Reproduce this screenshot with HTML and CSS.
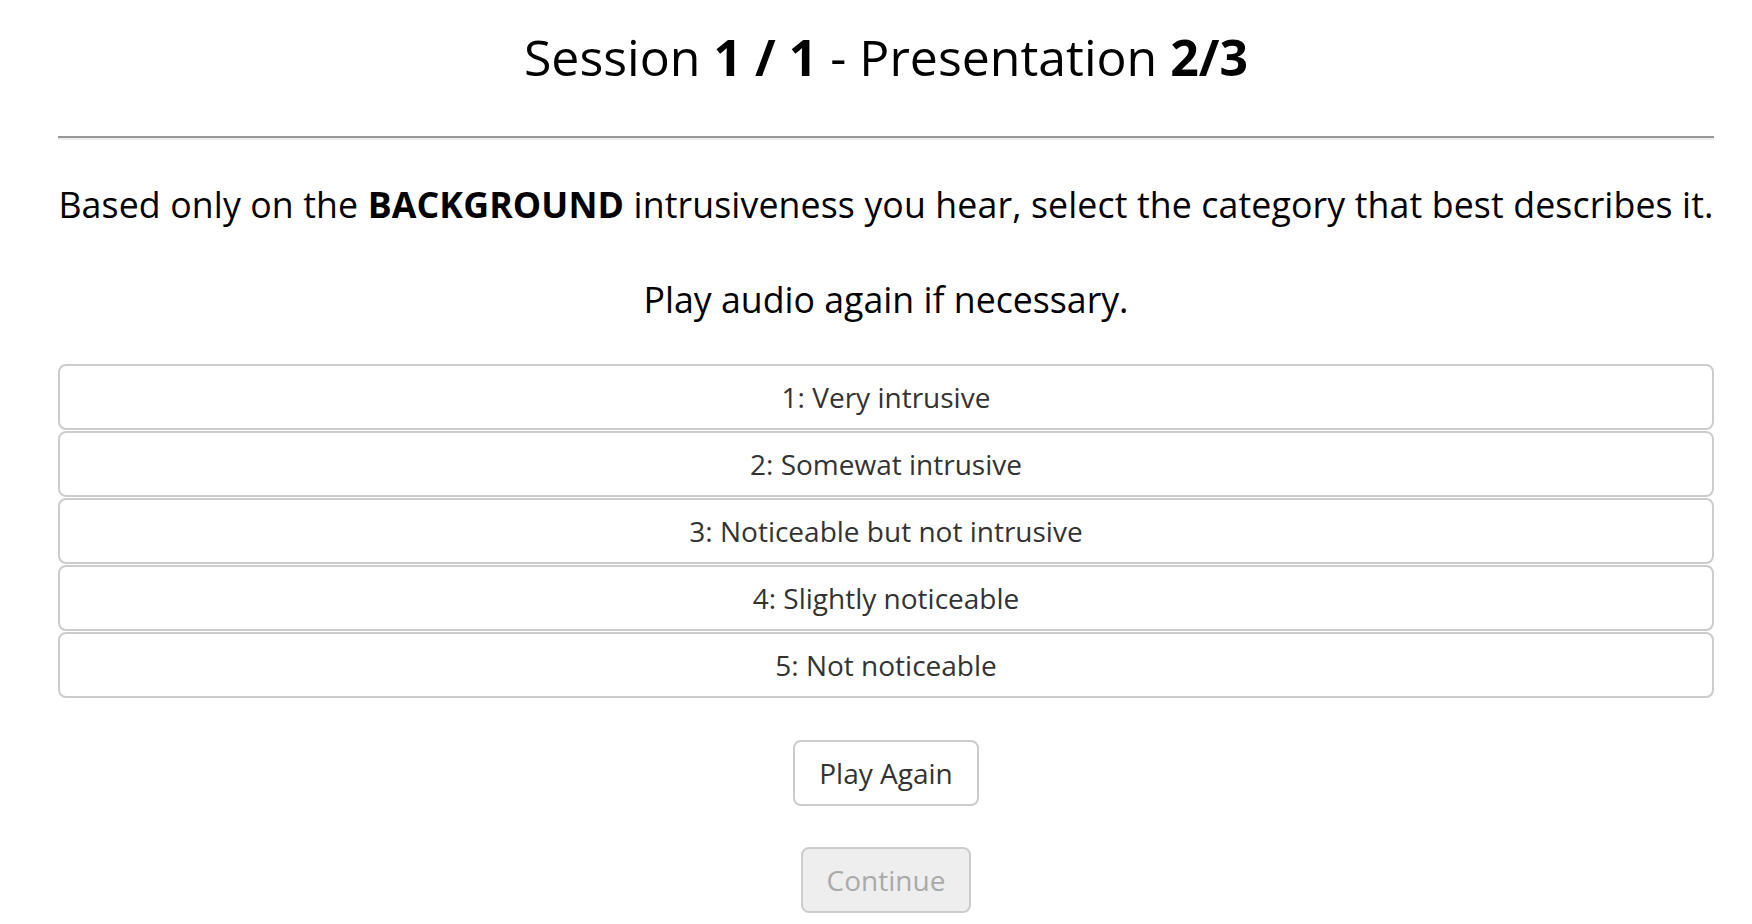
FILE: index.html
```html
<!DOCTYPE html>
<html>
<head>
<meta charset="utf-8">
<link rel="stylesheet" href="styles.css">
</head>
<body>
<div class="page">
  <h1 class="title">Session <b>1 / 1</b> - Presentation <b>2/3</b></h1>
  <hr class="rule">
  <p class="prompt">Based only on the <b>BACKGROUND</b> intrusiveness you hear, select the category that best describes it.</p>
  <p class="prompt">Play audio again if necessary.</p>
  <div class="options">
    <div class="option">1: Very intrusive</div>
    <div class="option">2: Somewat intrusive</div>
    <div class="option">3: Noticeable but not intrusive</div>
    <div class="option">4: Slightly noticeable</div>
    <div class="option">5: Not noticeable</div>
  </div>
  <div class="actions">
    <button class="btn">Play Again</button>
    <button class="btn btn-disabled" disabled>Continue</button>
  </div>
</div>
</body>
</html>
```

FILE: styles.css
```css
html, body {
  margin: 0;
  padding: 0;
  background: #fff;
}
body {
  font-family: "Open Sans", "Liberation Sans", sans-serif;
  color: #000;
}
.page {
  padding: 0 38px 0 58px;
}
.title {
  margin: 23px 0 0;
  font-size: 50px;
  line-height: 68px;
  font-weight: 400;
  text-align: center;
}
.title b { font-weight: 700; }
.rule {
  margin: 45px 0 0;
  border: 0;
  border-top: 2px solid #999;
  border-bottom: 2px solid #eee;
  height: 0;
}
.prompt {
  margin: 0;
  font-size: 35.7px;
  line-height: 49px;
  text-align: center;
  white-space: nowrap;
}
.prompt:first-of-type { margin-top: 40px; letter-spacing: 0.12px; }
.prompt + .prompt { margin-top: 46px; }
.options {
  margin-top: 40px;
  display: flex;
  flex-direction: column;
  gap: 1px;
}
.option {
  height: 62px;
  border: 2px solid #ccc;
  border-radius: 8px;
  display: flex;
  align-items: center;
  justify-content: center;
  font-size: 28px;
  color: #333;
}
.actions {
  display: flex;
  flex-direction: column;
  align-items: center;
  gap: 41px;
  margin-top: 42px;
}
.btn {
  font-family: "Open Sans", "Liberation Sans", sans-serif;
  font-size: 28px;
  color: #333;
  background: #fff;
  border: 2px solid #ccc;
  border-radius: 8px;
  height: 66px;
  padding: 0 24px;
}
.btn-disabled {
  background: #eee;
  color: #aaa;
}
```
